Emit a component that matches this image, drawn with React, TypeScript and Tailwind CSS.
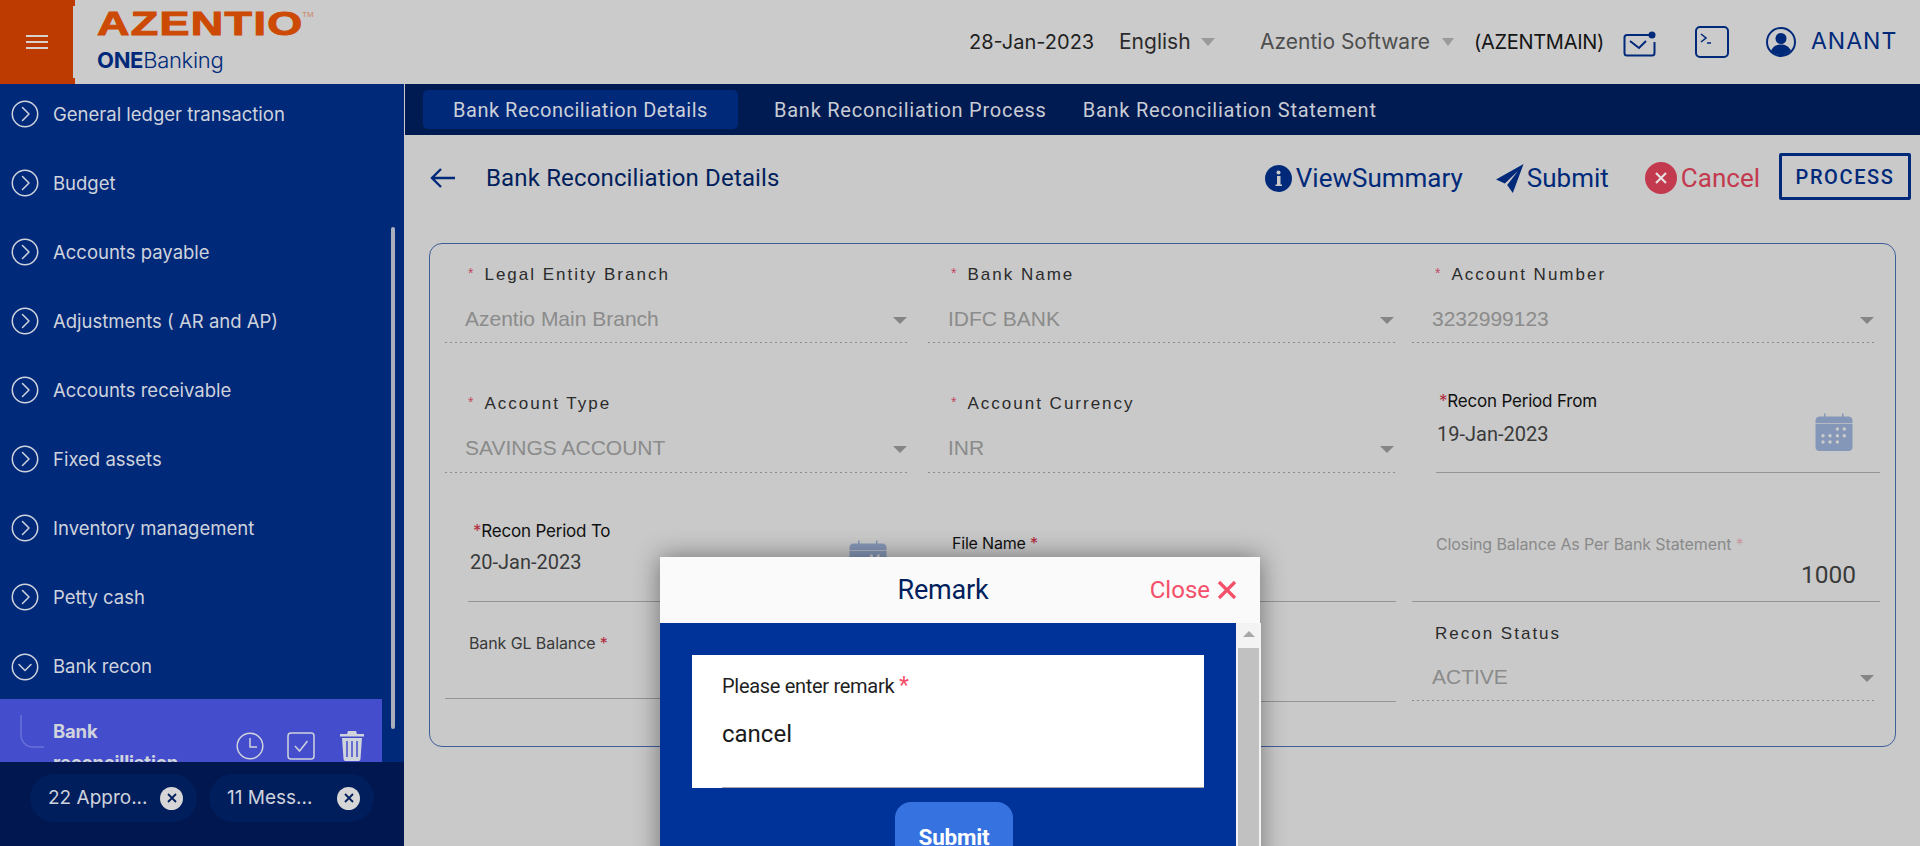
import React from "react";

const NAV = ["General ledger transaction", "Budget", "Accounts payable", "Adjustments ( AR and AP)", "Accounts receivable", "Fixed assets", "Inventory management", "Petty cash"];

function CircleChevron({ down }: { down?: boolean }) {
  return (
    <svg width="28" height="28" viewBox="0 0 28 28" fill="none" stroke="#cfd3dc" strokeWidth="1.5" strokeLinecap="round" strokeLinejoin="round" className="shrink-0">
      <circle cx="14" cy="14" r="12.7" />
      <path d={down ? "M8 11.5l6 6 6-6" : "M11.5 7.5l6.5 6.5-6.5 6.5"} />
    </svg>
  );
}

function Calendar() {
  return (
    <svg width="38" height="38" viewBox="0 0 38 38" className="block">
      <path d="M9 0.5h1.5v3H27v-3h1.5v3H33a4 4 0 0 1 4.5 4V10H0.5V7.5A4 4 0 0 1 5 3.5h4z" fill="#8597b8" />
      <path d="M0.5 10.800h37V34a4 4 0 0 1-4 4h-29a4 4 0 0 1-4-4z" fill="#8597b8" />
      {[[22.4, 16], [29.3, 16], [8, 22.7], [15, 22.7], [22.4, 22.7], [29.3, 22.7], [8, 29], [15, 29], [22.4, 29]].map(([x, y], i) => (
        <circle key={i} cx={x} cy={y} r="1.7" fill="#cbcbcb" />
      ))}
    </svg>
  );
}

function Arrow() {
  return <span className="w-0 h-0 border-l-[7px] border-r-[7px] border-t-[7px] border-l-transparent border-r-transparent border-t-[#858585] mt-[3px]" />;
}

function Dots() {
  return <div className="h-px w-full bg-[repeating-linear-gradient(90deg,#8c8c8c_0_2px,transparent_2px_5px)]" />;
}

function SelectField({ label, value, star = true, gap = "mb-[9px]", valuePad = "" }: { label: string; value: string; star?: boolean; gap?: string; valuePad?: string }) {
  return (
    <div className="flex flex-col justify-end h-full">
      <div className={`h-6 flex items-center text-[17px] tracking-[2px] text-[#2b2b2b] ${gap} pl-[23px] font-['Liberation_Sans',sans-serif]`}>
        {star && <span className="text-[#c2485f] text-[14px] mr-[9px] -mt-1">*</span>}
        {label}
      </div>
      <div className={`h-[46px] flex items-center justify-between pl-5 pr-[2px] font-['Liberation_Sans',sans-serif] text-[21px] text-[#8b8b8b] ${valuePad}`}>
        <span>{value}</span>
        <Arrow />
      </div>
      <Dots />
    </div>
  );
}

function App() {
  return (
    <div className="relative w-[1920px] h-[846px] overflow-hidden bg-[#cacaca] font-['Inter',sans-serif] flex flex-col">
      <header className="h-[84px] shrink-0 flex items-stretch bg-[#cbcbcb]">
        <div className="w-[73px] bg-[#bd3a00] flex items-center justify-center relative">
          <div className="flex flex-col gap-[4px] w-[22px]">
            <span className="h-[2px] bg-[#d8d2cd]" />
            <span className="h-[2px] bg-[#d8d2cd]" />
            <span className="h-[2px] bg-[#d8d2cd]" />
          </div>
          <span className="absolute right-[-2px] top-0 h-[6px] w-[2px] bg-[#bd3a00]" />
          <span className="absolute right-[-2px] bottom-0 h-[6px] w-[2px] bg-[#bd3a00]" />
        </div>
        <div className="pl-6 w-[680px] flex flex-col">
          <div className="flex items-start h-[48px] pt-[6px] relative">
            <span className="inline-block origin-left scale-x-[1.36] font-['Liberation_Sans',sans-serif] font-bold text-[33px] leading-[36px] tracking-[1px] text-[#cd4a05] [-webkit-text-stroke:1px_#cd4a05]">AZENTIO</span>
            <span className="absolute left-[205px] top-[10px] text-[8px] leading-[10px] text-[#c9825e] font-['Liberation_Sans',sans-serif]">TM</span>
          </div>
          <div className="text-[22px] leading-[26px] -mt-[1px] text-[#00297a] font-['Inter',sans-serif] -tracking-[0.3px]"><span className="font-bold">ONE</span><span className="font-light">Banking</span></div>
        </div>
        <div className="flex-1 relative flex items-center text-[#1f1f1f]">
          <span className="ml-[216px] text-[20px] w-[151px]">28-Jan-2023</span>
          <span className="text-[21px] text-[#2a2a2a] w-[74px] -ml-[1px]">English</span>
          <span className="ml-[8px] w-0 h-0 border-l-[7px] border-r-[7px] border-t-[8px] border-l-transparent border-r-transparent border-t-[#9a9a9a]" />
          <span className="ml-[45px] text-[21px] text-[#4e4e4e] w-[177px] whitespace-nowrap">Azentio Software</span>
          <span className="ml-[5px] w-0 h-0 border-l-[6px] border-r-[6px] border-t-[8px] border-l-transparent border-r-transparent border-t-[#9a9a9a]" />
          <span className="ml-[20px] text-[20px] w-[135px] whitespace-nowrap text-[#151515] -tracking-[0.3px]">(AZENTMAIN)</span>
          <svg width="34" height="26" viewBox="0 0 34 26" fill="none" stroke="#00297a" strokeWidth="2" className="ml-[14px] mt-[4px]">
            <path d="M27 4H4a2.500 2.500 0 0 0-2.500 2.500V22A2.500 2.500 0 0 0 4 24.500h25a2.500 2.500 0 0 0 2.500-2.500V11" />
            <path d="M7 10l9 7 7-7" />
            <circle cx="29" cy="4" r="3.500" fill="#00297a" stroke="none" />
          </svg>
          <svg width="34" height="32" viewBox="0 0 34 32" fill="none" stroke="#00297a" strokeWidth="2" className="ml-[38px] -mt-[1px]">
            <rect x="1" y="1" width="32" height="30" rx="4" />
            <path d="M6 8l5 4-5 4M12 17h4" strokeWidth="1.600" />
          </svg>
          <svg width="30" height="30" viewBox="0 0 30 30" className="ml-[37px] -mt-[1px]">
            <circle cx="15" cy="15" r="14" fill="none" stroke="#00297a" strokeWidth="2" />
            <circle cx="15" cy="11.500" r="5.500" fill="#00297a" />
            <path d="M5 24c2-5 6-6.500 10-6.500s8 1.500 10 6.500a14 14 0 0 1-20 0z" fill="#00297a" />
          </svg>
          <span className="ml-[15px] text-[23px] tracking-[1px] text-[#00297a] -mt-[2px]">ANANT</span>
        </div>
      </header>

      <div className="flex-1 flex min-h-0">
        <aside className="w-[404px] shrink-0 flex flex-col bg-[#00297a] mr-px">
          <div className="relative flex-1 min-h-0 overflow-hidden">
            <div className="flex flex-col text-[18.5px] text-[#cfd3dc] font-['Inter',sans-serif]">
              {NAV.map((n) => (
                <div key={n} className="h-[69px] flex items-center pl-[11px] gap-[14px] pb-[9px]">
                  <CircleChevron />
                  <span className="mt-[1px]">{n}</span>
                </div>
              ))}
              <div className="h-[63px] flex items-center pl-[11px] gap-[14px] pb-[2px]">
                <CircleChevron down />
                <span>Bank recon</span>
              </div>
              <div className="w-[382px] h-[63px] bg-[#444dcc] flex overflow-hidden">
                <svg width="26" height="34" viewBox="0 0 26 34" fill="none" stroke="#6a72d8" strokeWidth="1.500" className="ml-[20px] mt-[16px] shrink-0">
                  <path d="M1 0v20a12 12 0 0 0 12 12h11" />
                </svg>
                <div className="ml-[7px] w-[150px] font-bold text-[18.5px] leading-[31px] pt-[17px] -tracking-[0.2px]">Bank reconcilliation</div>
                <div className="flex items-start pt-[33px] ml-[33px]">
                  <svg width="28" height="28" viewBox="0 0 28 28" fill="none" stroke="#cfd3dc" strokeWidth="1.500"><circle cx="14" cy="14" r="12.800" /><path d="M14 6v9h7" /></svg>
                  <svg width="28" height="28" viewBox="0 0 28 28" fill="none" stroke="#cfd3dc" strokeWidth="1.500" className="ml-[23px]"><rect x="1" y="1" width="26" height="26" rx="3" /><path d="M8 14l4.500 5 8-10" /></svg>
                  <svg width="26" height="30" viewBox="0 0 26 30" fill="#cfd3dc" className="ml-[24px] -mt-[1px]"><path d="M9 0h8l1 3h7v2.500H1V3h7zM3 7h20l-1.500 21a2 2 0 0 1-2 2h-13a2 2 0 0 1-2-2z" /><path d="M8 10v16M13 10v16M18 10v16" stroke="#444dcc" strokeWidth="1.500" /></svg>
                </div>
              </div>
            </div>
            <div className="absolute left-[391px] top-[143px] w-1 h-[502px] rounded-full bg-[#a9afbd]" />
          </div>
          <div className="h-[84px] shrink-0 bg-[#00174f] flex items-start pt-3 pl-[30px] gap-3 text-[19px] text-[#cfd3dc]">
            <div className="w-[167px] h-12 rounded-full bg-[#001e5c] flex items-center pl-[18px] justify-between pr-[14px]">
              <span>22 Appro...</span>
              <span className="w-[23px] h-[23px] rounded-full bg-[#d6d6d6] flex items-center justify-center"><svg width="10" height="10" viewBox="0 0 10 10" stroke="#001e5c" strokeWidth="1.800"><path d="M1 1l8 8M9 1l-8 8" /></svg></span>
            </div>
            <div className="w-[165px] h-12 rounded-full bg-[#001e5c] flex items-center pl-[18px] justify-between pr-[14px]">
              <span>11 Mess...</span>
              <span className="w-[23px] h-[23px] rounded-full bg-[#d6d6d6] flex items-center justify-center"><svg width="10" height="10" viewBox="0 0 10 10" stroke="#001e5c" strokeWidth="1.800"><path d="M1 1l8 8M9 1l-8 8" /></svg></span>
            </div>
          </div>
        </aside>

        <main className="flex-1 min-w-0 flex flex-col bg-[#c9c9c9]">
          <nav className="h-[51px] shrink-0 bg-[#001a52] flex items-center text-[20px] tracking-[0.75px] text-[#c9ccd4] font-['Roboto',sans-serif]">
            <div className="ml-[18px] w-[315px] h-[39px] rounded-[5px] bg-[#00297a] flex items-center justify-center text-[#ccd0d8] text-[20px] tracking-[0.5px]">Bank Reconciliation Details</div>
            <span className="ml-9">Bank Reconciliation Process</span>
            <span className="ml-9">Bank Reconciliation Statement</span>
          </nav>

          <div className="h-[108px] shrink-0 flex items-center text-[#00297a] pb-[22px]">
            <svg width="26" height="22" viewBox="0 0 26 22" fill="none" stroke="#00297a" strokeWidth="2.400" className="ml-[25px]"><path d="M25 11H2M11 2l-9 9 9 9" /></svg>
            <span className="ml-[30px] text-[24px] tracking-[0.15px] text-[#001f5c] font-['Roboto',sans-serif]">Bank Reconciliation Details</span>
            <div className="ml-auto flex items-center mr-[9px]">
              <svg width="27" height="27" viewBox="0 0 27 27"><circle cx="13.500" cy="13.500" r="13.500" fill="#00297a" /><rect x="12" y="11" width="3.500" height="9.500" fill="#c9c9c9" /><rect x="10.500" y="19.500" width="6.500" height="1.500" fill="#c9c9c9" /><circle cx="13.500" cy="7.500" r="2" fill="#c9c9c9" /></svg>
              <span className="ml-[4px] text-[26px] font-['Roboto',sans-serif]">ViewSummary</span>
              <svg width="28" height="29" viewBox="0 0 30 29" preserveAspectRatio="none" className="ml-[33px]" fill="#00297a"><path d="M29.500 0L0 15.500l9.500 4 14-12.500L12 21l6 8z" /></svg>
              <span className="ml-[3px] text-[26px] font-['Roboto',sans-serif]">Submit</span>
              <span className="ml-9 w-[32px] h-[32px] rounded-full bg-[#c33a4e] flex items-center justify-center"><svg width="14" height="14" viewBox="0 0 14 14" stroke="#e6e0e0" strokeWidth="2.200"><path d="M2 2l10 10M12 2L2 12" /></svg></span>
              <span className="ml-[4px] text-[26px] text-[#c33a4e] font-['Roboto',sans-serif]">Cancel</span>
              <div className="ml-[19px] w-[132px] h-[47px] -mt-[3px] border-[3px] border-[#00297a] rounded-[2px] flex items-center justify-center text-[20px] tracking-[1.6px] font-medium font-['Roboto',sans-serif]">PROCESS</div>
            </div>
          </div>

          <section className="ml-[24px] w-[1467px] h-[504px] border border-[#3f5f9a] rounded-[13px] pl-[15px] pt-[19px] grid grid-cols-[464px_468px_468px] gap-x-[19px] grid-rows-[80px_130px_129px_100px] content-start">
            <SelectField label="Legal Entity Branch" value="Azentio Main Branch" />
            <SelectField label="Bank Name" value="IDFC BANK" />
            <div className="-ml-[3px] w-[464px]"><SelectField label="Account Number" value="3232999123" /></div>

            <SelectField label="Account Type" value="SAVINGS ACCOUNT" gap="mb-[10px]" valuePad="pb-[2px]" />
            <SelectField label="Account Currency" value="INR" gap="mb-[10px]" valuePad="pb-[2px]" />
            <div className="relative flex flex-col justify-end ml-[21px] w-[444px]">
              <div className="text-[17px] leading-6 text-[#101010] mb-[9px] -tracking-[0.2px] pl-[3px]"><span className="text-[#b22a3c]">*</span>Recon Period From</div>
              <div className="text-[20px] leading-6 text-[#3a3a3a] mb-[26px] font-['Roboto',sans-serif] pl-[1px]">19-Jan-2023</div>
              <div className="h-px bg-[#949494]" />
              <div className="absolute right-[27px] bottom-[22px]"><Calendar /></div>
            </div>

            <div className="relative flex flex-col justify-end pl-[23px]">
              <div className="text-[17px] leading-6 text-[#101010] mb-[7px] -tracking-[0.2px] pl-[5px]"><span className="text-[#b22a3c]">*</span>Recon Period To</div>
              <div className="text-[20px] leading-6 text-[#3a3a3a] mb-[27px] font-['Roboto',sans-serif] pl-[2px]">20-Jan-2023</div>
              <div className="h-px bg-[#949494]" />
              <div className="absolute right-[22px] bottom-[24px]"><Calendar /></div>
            </div>
            <div className="flex flex-col justify-end">
              <div className="text-[16px] leading-6 text-[#101010] mb-[46px] pl-6 -tracking-[0.2px]">File Name <span className="text-[#b22a3c]">*</span></div>
              <div className="h-px bg-[#949494]" />
            </div>
            <div className="flex flex-col justify-end -ml-[3px] w-[468px]">
              <div className="text-[16px] leading-6 text-[#8a8a8a] pl-6 -tracking-[0.1px] mb-[3px]">Closing Balance As Per Bank Statement <span className="text-[#c79aa0]">*</span></div>
              <div className="text-[24.5px] leading-7 text-[#3a3a3a] text-right pr-6 mb-[12px] mt-[2px] font-['Roboto',sans-serif]">1000</div>
              <div className="h-px bg-[#949494]" />
            </div>

            <div className="flex flex-col justify-end mb-[3px]">
              <div className="text-[16px] leading-6 text-[#3a3a3a] mb-[43px] pl-6 -tracking-[0.1px]">Bank GL Balance <span className="text-[#b22a3c]">*</span></div>
              <div className="h-px bg-[#949494]" />
            </div>
            <div className="flex flex-col justify-end">
              <div className="h-px bg-[#949494]" />
            </div>
            <div className="-ml-[3px] w-[464px] mb-[1px]"><SelectField label="Recon Status" value="ACTIVE" star={false} gap="mb-[8px]" /></div>
          </section>
        </main>
      </div>

      <div className="absolute left-[660px] top-[557px] w-[600px] h-[340px] bg-[#fafafa] flex flex-col shadow-[0_0_24px_rgba(0,0,0,0.45)]">
        <div className="h-[66px] shrink-0 relative flex items-center justify-center">
          <span className="ml-[-34px] text-[27px] text-[#001f5c] -tracking-[0.2px] font-['Roboto',sans-serif]">Remark</span>
          <div className="absolute right-[23px] top-0 h-full flex items-center gap-[7px] text-[24px] text-[#f5506a] font-['Roboto',sans-serif]">
            Close
            <svg width="20" height="20" viewBox="0 0 20 20" stroke="#f5506a" strokeWidth="3.200"><path d="M2 2l16 16M18 2L2 18" /></svg>
          </div>
        </div>
        <div className="flex-1 flex min-h-0">
          <div className="flex-1 bg-[#003399] pt-8 px-8 flex flex-col">
            <div className="w-[512px] h-[133px] bg-white pl-[30px] flex flex-col">
              <div className="pt-[19px] text-[20px] leading-6 text-[#1f1f1f] -tracking-[0.3px] font-['Roboto',sans-serif]">Please enter remark <span className="text-[#f5506a] text-[23px] leading-4">*</span></div>
              <div className="mt-[22px] text-[24px] leading-7 text-[#1a1a1a] font-['Roboto',sans-serif]">cancel</div>
              <div className="mt-auto h-px bg-[#a8a8a8]" />
            </div>
            <div className="mt-[14px] ml-[203px] w-[118px] h-[80px] rounded-[16px] bg-[#3672e0] text-white font-bold text-[22.5px] flex justify-center pt-[19px] font-['Roboto',sans-serif] -tracking-[0.2px]">Submit</div>
          </div>
          <div className="w-[25px] shrink-0 bg-[#f3f3f3] flex flex-col items-center pt-[8px]">
            <span className="w-0 h-0 border-l-[6px] border-r-[6px] border-b-[6px] border-l-transparent border-r-transparent border-b-[#a8a8a8]" />
            <div className="mt-[11px] w-[21px] flex-1 bg-[#c1c1c1]" />
          </div>
        </div>
      </div>
    </div>
  );
}

export default App;
